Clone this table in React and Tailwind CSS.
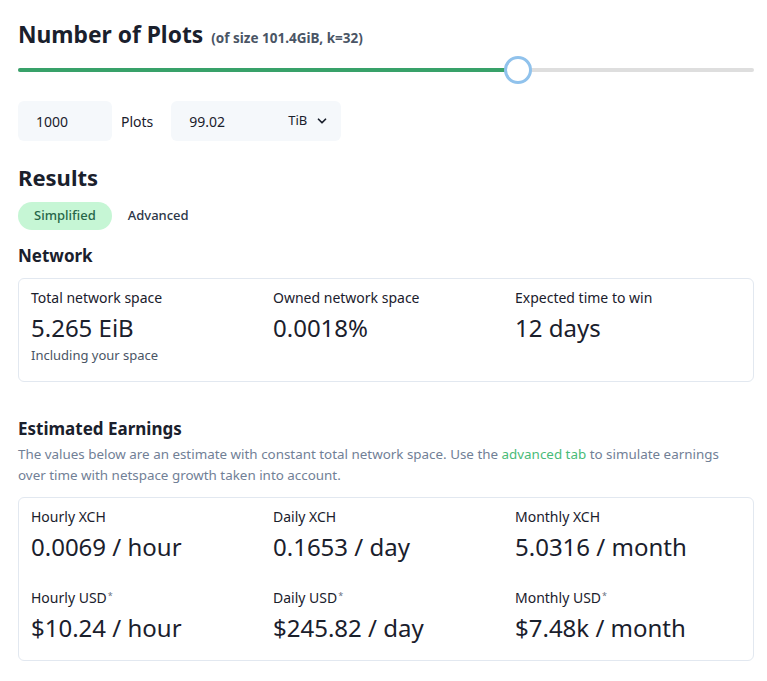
import { ChevronDown } from 'lucide-react';

const network = [
  { label: 'Total network space', value: '5.265 EiB', note: 'Including your space' },
  { label: 'Owned network space', value: '0.0018%' },
  { label: 'Expected time to win', value: '12 days' },
];

const earnings = [
  { label: 'Hourly XCH', value: '0.0069 / hour' },
  { label: 'Daily XCH', value: '0.1653 / day' },
  { label: 'Monthly XCH', value: '5.0316 / month' },
  { label: 'Hourly USD', value: '$10.24 / hour', star: true },
  { label: 'Daily USD', value: '$245.82 / day', star: true },
  { label: 'Monthly USD', value: '$7.48k / month', star: true },
];

const Stat = ({ label, value, note, star }) => (
  <div className="flex flex-col">
    <div className="text-[14px] leading-5 text-[#1a202c]">
      {label}
      {star && <sup className="text-[9px] text-gray-500 ml-px">*</sup>}
    </div>
    <div className="text-[24px] leading-8 mt-1 text-[#1a202c]">{value}</div>
    {note && <div className="text-[13px] leading-5 text-gray-600 mt-px">{note}</div>}
  </div>
);

export default function App() {
  return (
    <div
      className="bg-white pl-[18px] pr-[13px] pt-[18px] pb-6 text-[#1a202c]"
      style={{ fontFamily: '"Noto Sans", "Open Sans", sans-serif' }}
    >
      {/* Header */}
      <div className="flex items-baseline gap-2 h-[34px]">
        <h1 className="text-[22.8px] font-bold leading-[34px]">Number of Plots</h1>
        <span className="text-[13.5px] font-bold text-gray-600">(of size 101.4GiB, k=32)</span>
      </div>

      {/* Slider */}
      <div className="relative h-[36px] flex items-center">
        <div className="h-1 w-full rounded-full bg-[#dedede]" />
        <div className="absolute left-0 h-1 rounded-full bg-[#38a169]" style={{ width: '66.5%' }} />
        <div
          className="absolute w-[28px] h-[28px] rounded-full bg-white border-[3px] border-[#90c2ec] -translate-x-1/2"
          style={{ left: '67.9%' }}
        />
      </div>

      {/* Inputs */}
      <div className="flex items-center mt-[13px] h-10">
        <div className="w-[94px] h-10 rounded-md bg-[#f5f8fb] flex items-center pl-[18px] text-[14px]">1000</div>
        <span className="ml-[9px] text-[14px]">Plots</span>
        <div className="ml-[18px] w-[170px] h-10 rounded-md bg-[#f5f8fb] flex items-center pl-[18px] pr-3 text-[14px]">
          <span className="flex-1">99.02</span>
          <span className="text-[13px] mr-2">TiB</span>
          <ChevronDown size={14} strokeWidth={3} />
        </div>
      </div>

      {/* Results */}
      <h2 className="text-[22px] font-bold leading-8 mt-5">Results</h2>
      <div className="flex items-center gap-4 mt-[9px]">
        <div className="h-7 px-4 rounded-full bg-[#c6f6d5] text-[#276749] text-[13px] font-medium flex items-center">
          Simplified
        </div>
        <div className="text-[13px] font-medium text-[#2d3748]">Advanced</div>
      </div>

      {/* Network */}
      <h3 className="text-[17px] font-bold leading-6 mt-[14px]">Network</h3>
      <div className="mt-[10px] border border-[#e2e8f0] rounded-md pl-[12px] pt-[9px] pb-[16px] grid grid-cols-[242px_242px_1fr]">
        {network.map((s) => (
          <Stat key={s.label} {...s} />
        ))}
      </div>

      {/* Estimated earnings */}
      <h3 className="text-[17px] font-bold leading-6 mt-[35px]">Estimated Earnings</h3>
      <p className="max-w-[712px] text-[13.4px] leading-[21px] text-[#718096] mt-[3px]">
        The values below are an estimate with constant total network space. Use the{' '}
        <span className="text-[#48bb78]">advanced tab</span> to simulate earnings over time with netspace growth
        taken into account.
      </p>
      <div className="mt-[11px] border border-[#e2e8f0] rounded-md pl-[12px] pt-[9px] pb-[16px] grid grid-cols-[242px_242px_1fr] gap-y-[25px]">
        {earnings.map((s) => (
          <Stat key={s.label} {...s} />
        ))}
      </div>
    </div>
  );
}
